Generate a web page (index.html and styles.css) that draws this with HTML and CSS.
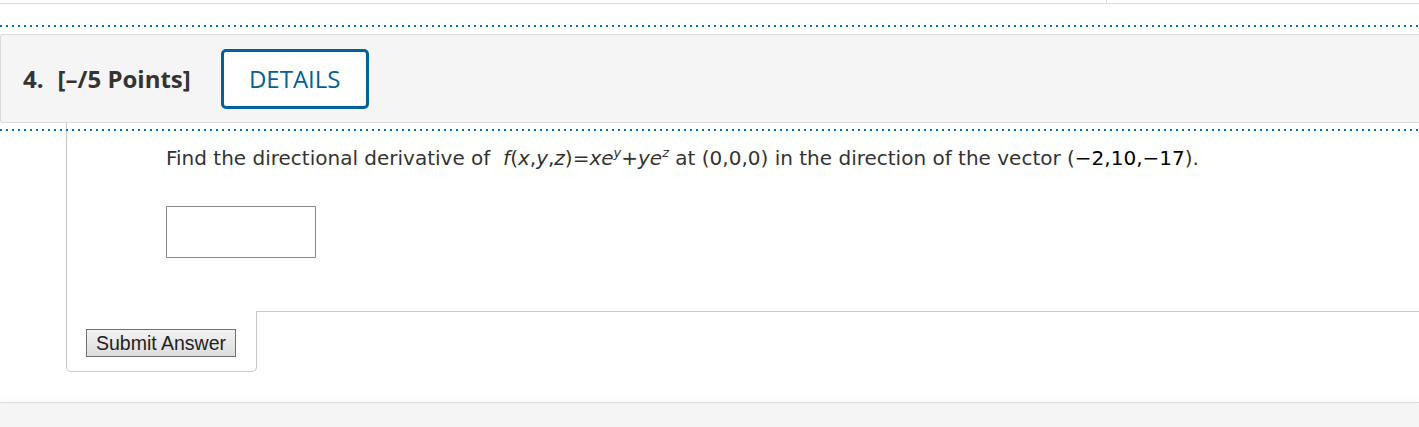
FILE: index.html
```html
<!DOCTYPE html>
<html lang="en">
<head>
<meta charset="utf-8">
<title>Question 4</title>
<link rel="stylesheet" href="styles.css">
</head>
<body>
<div class="topbar">
  <div class="topbar-cell topbar-cell--left"></div>
  <div class="topbar-cell"></div>
</div>

<div class="question-header">
  <span class="q-number">4.</span>
  <span class="q-points">[–/5 Points]</span>
  <button class="details-btn" type="button">DETAILS</button>
</div>

<div class="question-card">
  <div class="question-body">
    <p class="question-text">Find the directional derivative of&nbsp; <span class="math"><i>f</i>(<i>x</i>,<i>y</i>,<i>z</i>)=<i>xe</i><sup><i>y</i></sup>+<i>ye</i><sup><i>z</i></sup></span> at (0,0,0) in the direction of the vector <span class="vec">(<span class="num">−2,10,−17</span>)</span>.</p>
    <input class="answer-input" type="text" aria-label="answer">
  </div>
  <div class="submit-row">
    <div class="submit-tab">
      <button class="submit-btn" type="button">Submit Answer</button>
    </div>
    <div class="submit-rest"></div>
  </div>
</div>

<div class="bottom-band"></div>
</body>
</html>
```

FILE: styles.css
```css
html, body {
  margin: 0;
  padding: 0;
  background: #ffffff;
  overflow: hidden;
}

body {
  width: 1419px;
  height: 427px;
  font-family: "DejaVu Sans", Verdana, sans-serif;
}

.topbar {
  display: flex;
  height: 3px;
  border-bottom: 1px solid #dcdcdc;
}

.topbar-cell {
  flex: 1;
}

.topbar-cell--left {
  flex: 0 0 1106px;
  border-right: 1px solid #dcdcdc;
}

.question-header {
  position: relative;
  margin-top: 30px;
  height: 87px;
  display: flex;
  align-items: center;
  background: #f5f5f5;
  border-top: 1px solid #dcdcdc;
  border-bottom: 1px solid #dcdcdc;
  border-left: 1px solid #dcdcdc;
  border-radius: 3px 0 0 3px;
  padding-left: 22px;
  font-family: "Open Sans", sans-serif;
}

.question-header::before,
.question-header::after {
  content: "";
  position: absolute;
  left: -1px;
  right: 0;
  height: 2px;
  background: repeating-linear-gradient(90deg, #0070d0 0 2px, transparent 2px 6px);
}

.question-header::before {
  top: -10px;
}

.question-header::after {
  bottom: -9px;
}

.q-number,
.q-points {
  font-weight: 700;
  font-size: 24px;
  color: #333333;
}

.q-number {
  margin-right: 14px;
}

.details-btn {
  margin-left: 30px;
  width: 148px;
  height: 60px;
  box-sizing: border-box;
  background: #ffffff;
  border: 3px solid #00629b;
  border-radius: 5px;
  color: #00629b;
  font-family: "Open Sans", sans-serif;
  font-size: 24px;
  padding: 0;
}

.question-card {
  margin-left: 66px;
}

.question-body {
  border-left: 1px solid #c8c8c8;
  padding: 21px 0 53px 99px;
}

.question-text {
  margin: 0;
  font-size: 20px;
  line-height: 28px;
  color: #333333;
  white-space: nowrap;
}

.math i {
  font-style: italic;
}

.math sup {
  font-size: 13px;
  line-height: 0;
  vertical-align: 8px;
}

.vec .num {
  color: #000000;
}

.answer-input {
  display: block;
  margin-top: 34px;
  width: 150px;
  height: 52px;
  box-sizing: border-box;
  border: 1px solid #8a8a8a;
  background: #ffffff;
  padding: 0;
}

.submit-row {
  display: flex;
}

.submit-tab {
  box-sizing: border-box;
  width: 191px;
  border-left: 1px solid #c8c8c8;
  border-right: 1px solid #c8c8c8;
  border-bottom: 1px solid #c8c8c8;
  border-radius: 0 0 5px 5px;
  padding: 18px 0 14px 19px;
}

.submit-rest {
  flex: 1;
  border-top: 1px solid #c8c8c8;
}

.submit-btn {
  display: block;
  width: 150px;
  height: 28px;
  box-sizing: border-box;
  border: 1px solid #707070;
  border-radius: 0;
  background: linear-gradient(#f2f2f2, #dddddd);
  font-family: "Liberation Sans", Arial, sans-serif;
  font-size: 19.5px;
  color: #222222;
  padding: 0;
  line-height: 26px;
}

.bottom-band {
  margin-top: 30px;
  height: 30px;
  background: #f5f5f5;
  border-top: 1px solid #dcdcdc;
  box-shadow: 0 -4px 6px rgba(0, 0, 0, 0.025);
}
```
